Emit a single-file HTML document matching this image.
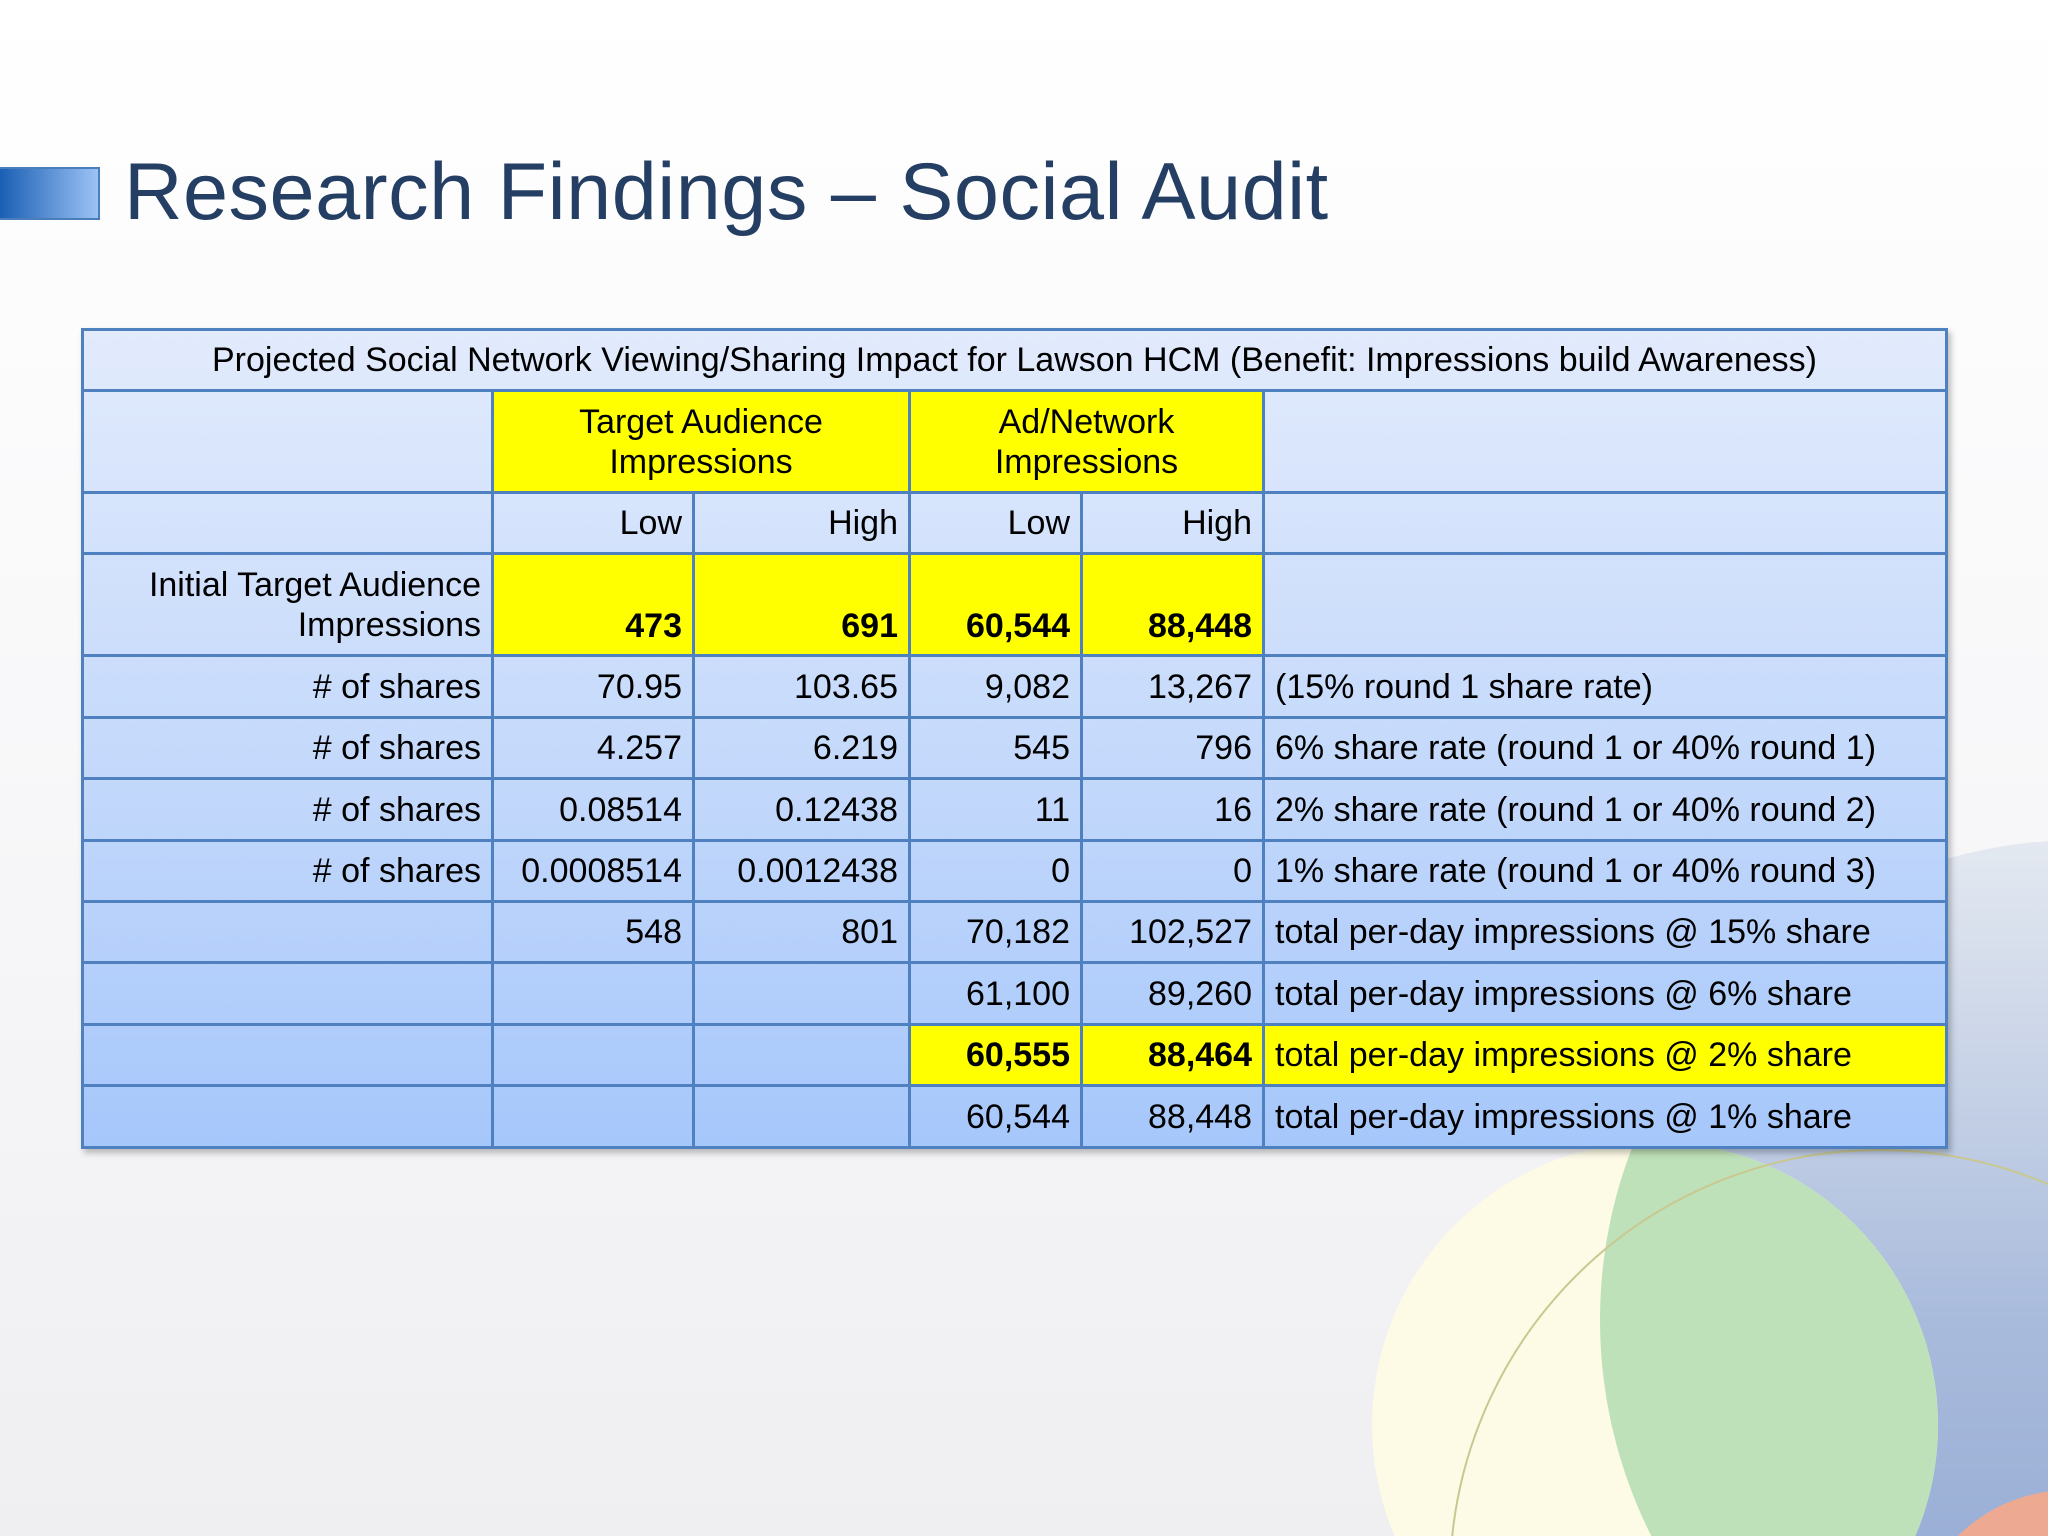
<!DOCTYPE html>
<html><head><meta charset="utf-8"><style>
html,body{margin:0;padding:0;overflow:hidden}
body{width:2048px;height:1536px;position:relative;overflow:hidden;background:linear-gradient(180deg,#ffffff 0%,#f6f6f8 60%,#efeff2 100%);font-family:"Liberation Sans",sans-serif}
.sq{position:absolute;left:0;top:167px;width:100px;height:53px;background:linear-gradient(90deg,#1a5fb4,#9cc2f5);border:2px solid #4a7ebb;border-left:none;box-sizing:border-box}
h1{position:absolute;left:124px;top:142px;margin:0;font-weight:normal;font-size:81px;line-height:100px;color:#243f63;letter-spacing:0.5px;white-space:nowrap}
table{position:absolute;left:81px;top:328px;border-collapse:collapse;box-shadow:3px 4px 6px rgba(0,0,0,.25);background:linear-gradient(180deg,#e2ebfc 0%,#c6dafb 50%,#a6c7fb 100%)}
td{border:3px solid #4f80c0;font-size:34px;color:#000;padding:0 10px;text-align:right;white-space:nowrap;line-height:40px}
.c{text-align:center}.l{text-align:left}
.y{background:#ffff00}
b{font-weight:bold}
</style></head><body>
<svg style="position:absolute;left:0;top:0" width="2048" height="1536">
<defs>
<linearGradient id="bg2" x1="0" y1="0" x2="0" y2="1"><stop offset="0" stop-color="#e4e9f1"/><stop offset="0.5" stop-color="#a9bbdc"/><stop offset="1" stop-color="#8aa2d0"/></linearGradient>
<clipPath id="cy"><circle cx="1655" cy="1425" r="283"/></clipPath>
</defs>
<circle cx="2080" cy="1320" r="480" fill="url(#bg2)"/>
<circle cx="1655" cy="1425" r="283" fill="#fdfbe6"/>
<circle cx="2080" cy="1320" r="480" fill="#bfe1b9" clip-path="url(#cy)"/>
<circle cx="1880" cy="1580" r="430" fill="none" stroke="#c8c890" stroke-width="2"/>
<circle cx="2070" cy="1650" r="160" fill="#f6a98a" opacity="0.9"/>
</svg>
<div class="sq"></div>
<h1>Research Findings – Social Audit</h1>
<table>
<colgroup><col style="width:410px"><col style="width:201px"><col style="width:216px"><col style="width:172px"><col style="width:182px"><col style="width:683px"></colgroup>
<tr style="height:61px"><td colspan="6" class="c">Projected Social Network Viewing/Sharing Impact for Lawson HCM (Benefit: Impressions build Awareness)</td></tr>
<tr style="height:102px"><td></td><td colspan="2" class="c y">Target Audience<br>Impressions</td><td colspan="2" class="c y">Ad/Network<br>Impressions</td><td></td></tr>
<tr style="height:61px"><td></td><td>Low</td><td>High</td><td>Low</td><td>High</td><td></td></tr>
<tr style="height:102px"><td style="line-height:40px">Initial Target Audience<br>Impressions</td><td class="y" style="vertical-align:bottom;padding-bottom:8px"><b>473</b></td><td class="y" style="vertical-align:bottom;padding-bottom:8px"><b>691</b></td><td class="y" style="vertical-align:bottom;padding-bottom:8px"><b>60,544</b></td><td class="y" style="vertical-align:bottom;padding-bottom:8px"><b>88,448</b></td><td></td></tr>
<tr style="height:62px"><td># of shares</td><td>70.95</td><td>103.65</td><td>9,082</td><td>13,267</td><td class="l">(15% round 1 share rate)</td></tr>
<tr style="height:61px"><td># of shares</td><td>4.257</td><td>6.219</td><td>545</td><td>796</td><td class="l">6% share rate (round 1 or 40% round 1)</td></tr>
<tr style="height:62px"><td># of shares</td><td>0.08514</td><td>0.12438</td><td>11</td><td>16</td><td class="l">2% share rate (round 1 or 40% round 2)</td></tr>
<tr style="height:61px"><td># of shares</td><td>0.0008514</td><td>0.0012438</td><td>0</td><td>0</td><td class="l">1% share rate (round 1 or 40% round 3)</td></tr>
<tr style="height:61px"><td></td><td>548</td><td>801</td><td>70,182</td><td>102,527</td><td class="l">total per-day impressions @ 15% share</td></tr>
<tr style="height:62px"><td></td><td></td><td></td><td>61,100</td><td>89,260</td><td class="l">total per-day impressions @ 6% share</td></tr>
<tr style="height:61px"><td></td><td></td><td></td><td class="y"><b>60,555</b></td><td class="y"><b>88,464</b></td><td class="l y">total per-day impressions @ 2% share</td></tr>
<tr style="height:62px"><td></td><td></td><td></td><td>60,544</td><td>88,448</td><td class="l">total per-day impressions @ 1% share</td></tr>
</table>
</body></html>
